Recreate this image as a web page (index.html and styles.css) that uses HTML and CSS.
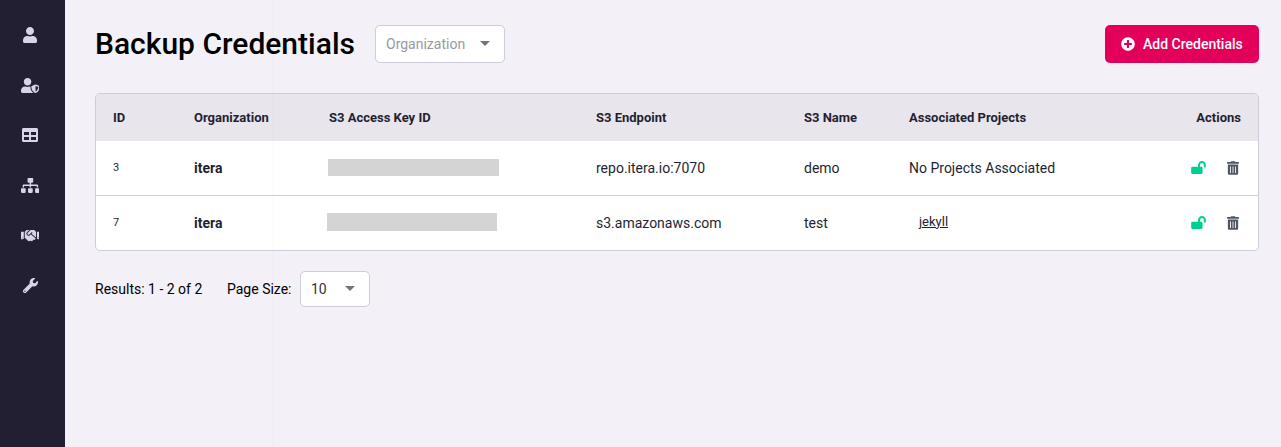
FILE: index.html
```html
<!DOCTYPE html>
<html lang="en">
<head>
<meta charset="utf-8">
<title>Backup Credentials</title>
<link rel="stylesheet" href="styles.css">
</head>
<body>
<svg class="defs" aria-hidden="true">
  <symbol id="lock-open" viewBox="0 0 576 512"><path d="M423.5 0C339.5.3 272 69.500 272 153.500V224H48c-26.500 0-48 21.500-48 48v192c0 26.500 21.500 48 48 48h352c26.500 0 48-21.500 48-48V272c0-26.500-21.500-48-48-48h-48v-71.100c0-39.600 31.700-72.500 71.300-72.900 40-.4 72.700 32.100 72.700 72v80c0 13.300 10.700 24 24 24h32c13.300 0 24-10.700 24-24v-80C576 68 507.500-.3 423.500 0z"/></symbol>
  <symbol id="trash" viewBox="0 0 448 512"><path d="M32 464a48 48 0 0 0 48 48h288a48 48 0 0 0 48-48V128H32zm272-256a16 16 0 0 1 32 0v224a16 16 0 0 1-32 0zm-96 0a16 16 0 0 1 32 0v224a16 16 0 0 1-32 0zm-96 0a16 16 0 0 1 32 0v224a16 16 0 0 1-32 0zM432 32H312l-9.400-18.700A24 24 0 0 0 281.100 0H166.800a23.720 23.720 0 0 0-21.400 13.300L136 32H16A16 16 0 0 0 0 48v32a16 16 0 0 0 16 16h416a16 16 0 0 0 16-16V48a16 16 0 0 0-16-16z"/></symbol>
</svg>
<div class="app">
  <nav class="sidebar">
    <a class="nav-item"><svg viewBox="0 0 448 512"><path d="M224 256c70.7 0 128-57.3 128-128S294.7 0 224 0 96 57.3 96 128s57.3 128 128 128zm89.6 32h-16.7c-22.2 10.2-46.9 16-72.9 16s-50.6-5.8-72.9-16h-16.7C60.2 288 0 348.2 0 422.4V464c0 26.5 21.5 48 48 48h352c26.5 0 48-21.5 48-48v-41.6c0-74.2-60.2-134.400-134.400-134.400z"/></svg></a>
    <a class="nav-item"><svg viewBox="0 0 640 512"><path d="M622.3 271.1l-115.200-45c-4.100-1.600-12.600-3.700-22.200 0l-115.200 45c-10.700 4.200-17.700 14-17.700 24.900 0 111.600 68.700 188.800 132.900 213.900 9.600 3.700 18 1.600 22.200 0C558.400 489.900 640 420.500 640 296c0-10.900-7-20.700-17.700-24.900zM496 462.400V273.300l95.500 37.300c-5.600 87.100-60.900 135.400-95.500 151.800zM224 256c70.700 0 128-57.300 128-128S294.700 0 224 0 96 57.300 96 128s57.300 128 128 128zm96 40c0-2.500.8-4.800 1.100-7.200-2.500-.1-4.900-.8-7.500-.8h-16.700c-22.200 10.200-46.900 16-72.900 16s-50.600-5.800-72.900-16h-16.700C60.200 288 0 348.200 0 422.400V464c0 26.500 21.500 48 48 48h352c6.800 0 13.300-1.500 19.200-4-54-42.900-99.200-116.700-99.200-212z"/></svg></a>
    <a class="nav-item"><svg viewBox="0 0 512 512"><path d="M464 32H48C21.490 32 0 53.490 0 80v352c0 26.510 21.490 48 48 48h416c26.510 0 48-21.490 48-48V80c0-26.510-21.490-48-48-48zM224 416H64v-96h160v96zm0-160H64v-96h160v96zm224 160H288v-96h160v96zm0-160H288v-96h160v96z"/></svg></a>
    <a class="nav-item"><svg viewBox="0 0 640 512"><path d="M128 352H32c-17.670 0-32 14.330-32 32v96c0 17.670 14.330 32 32 32h96c17.670 0 32-14.330 32-32v-96c0-17.670-14.330-32-32-32zm-24-80h192v48h48v-48h192v48h48v-57.590c0-21.170-17.230-38.410-38.410-38.410H344v-64h40c17.670 0 32-14.330 32-32V32c0-17.670-14.330-32-32-32H256c-17.670 0-32 14.330-32 32v96c0 17.670 14.330 32 32 32h40v64H94.410C73.230 224 56 241.230 56 262.410V320h48v-48zm264 80h-96c-17.670 0-32 14.330-32 32v96c0 17.670 14.330 32 32 32h96c17.670 0 32-14.330 32-32v-96c0-17.670-14.330-32-32-32zm240 0h-96c-17.670 0-32 14.330-32 32v96c0 17.670 14.330 32 32 32h96c17.670 0 32-14.330 32-32v-96c0-17.670-14.330-32-32-32z"/></svg></a>
    <a class="nav-item"><svg viewBox="0 0 640 512"><path d="M434.7 64h-85.900c-8 0-15.700 3-21.600 8.400l-98.300 90c-.1.1-.2.3-.3.4-16.600 15.600-16.300 40.500-2.100 56 12.700 13.900 39.400 17.600 56.100 2.700.1-.1.3-.1.4-.2l79.900-73.200c6.500-5.900 16.700-5.500 22.600 1 6 6.500 5.500 16.600-1 22.600l-26.100 23.900L504 313.800c2.900 2.400 5.500 5 7.900 7.700V128l-54.600-54.600c-5.900-6-14.100-9.400-22.600-9.400zM544 128.200v223.900c0 17.700 14.300 32 32 32h64V128.200h-96zm48 223.900c-8.800 0-16-7.200-16-16s7.200-16 16-16 16 7.200 16 16-7.200 16-16 16zM0 384h64c17.700 0 32-14.300 32-32V128.200H0V384zm48-63.900c8.800 0 16 7.200 16 16s-7.200 16-16 16-16-7.200-16-16c0-8.900 7.200-16 16-16zm435.900 18.600L334.600 217.500l-30 27.500c-29.700 27.100-75.200 24.500-101.700-4.400-26.900-29.400-24.800-74.900 4.400-101.700L289.100 64h-83.800c-8.500 0-16.600 3.400-22.600 9.400L128 128v223.900h18.300l90.500 81.900c27.400 22.300 67.700 18.100 90-9.300l.2-.2 17.900 15.500c15.900 13 39.400 10.500 52.300-5.400l31.400-38.600 5.400 4.400c13.700 11.100 33.900 9.100 45-4.700l9.500-11.700c11.200-13.800 9.100-33.900-4.600-45.100z"/></svg></a>
    <a class="nav-item"><svg viewBox="0 0 512 512"><path d="M507.730 109.100c-2.240-9.030-13.540-12.090-20.120-5.510l-74.360 74.360-67.880-11.310-11.310-67.880 74.360-74.360c6.620-6.620 3.430-17.900-5.660-20.160-47.380-11.740-99.550.91-136.580 37.930-39.640 39.640-50.550 97.100-34.050 147.200L18.740 402.760c-24.990 24.990-24.990 65.510 0 90.500 24.990 24.990 65.510 24.990 90.500 0l213.210-213.210c50.120 16.710 107.470 5.680 147.370-34.220 37.070-37.070 49.700-89.320 37.910-136.730zM64 472c-13.250 0-24-10.750-24-24 0-13.260 10.750-24 24-24s24 10.740 24 24c0 13.250-10.750 24-24 24z"/></svg></a>
  </nav>
  <main class="content">
    <header class="page-header">
      <h1 class="title">Backup Credentials</h1>
      <div class="select select-org"><span>Organization</span><i class="caret"></i></div>
      <button class="add-button"><svg viewBox="0 0 512 512"><path d="M256 8C119 8 8 119 8 256s111 248 248 248 248-111 248-248S393 8 256 8zm144 276c0 6.600-5.400 12-12 12h-92v92c0 6.600-5.400 12-12 12h-56c-6.600 0-12-5.400-12-12v-92h-92c-6.600 0-12-5.400-12-12v-56c0-6.600 5.400-12 12-12h92v-92c0-6.600 5.400-12 12-12h56c6.600 0 12 5.400 12 12v92h92c6.600 0 12 5.400 12 12v56z"/></svg><span>Add Credentials</span></button>
    </header>
    <section class="table">
      <div class="row head">
        <span>ID</span><span>Organization</span><span>S3 Access Key ID</span><span>S3 Endpoint</span><span>S3 Name</span><span>Associated Projects</span><span class="actions-head">Actions</span>
      </div>
      <div class="row">
        <span class="id">3</span><span class="org">itera</span><span class="mask mask-first"></span><span>repo.itera.io:7070</span><span>demo</span><span>No Projects Associated</span>
        <span class="actions"><svg class="lock"><use href="#lock-open"/></svg><svg class="trash"><use href="#trash"/></svg></span>
      </div>
      <div class="row">
        <span class="id">7</span><span class="org">itera</span><span class="mask mask-second"></span><span>s3.amazonaws.com</span><span>test</span><a class="project">jekyll</a>
        <span class="actions"><svg class="lock"><use href="#lock-open"/></svg><svg class="trash"><use href="#trash"/></svg></span>
      </div>
    </section>
    <footer class="pager">
      <span class="results">Results: 1 - 2 of 2</span>
      <span class="size-label">Page Size:</span>
      <div class="select select-size"><span>10</span><i class="caret"></i></div>
    </footer>
  </main>
</div>
<div class="seam"></div>
</body>
</html>
```
FILE: styles.css
```css
* { box-sizing: border-box; }
body {
  margin: 0;
  background: #f3f0f8;
  color: #000;
  font: 14px/20px Roboto, "Liberation Sans", sans-serif;
}
.defs { display: none; }
.app { display: flex; height: 447px; }
.sidebar {
  width: 65px;
  flex: none;
  background: #231f32;
  padding: 10px 5px 0 0;
}
.nav-item {
  display: flex;
  height: 50px;
  align-items: center;
  justify-content: center;
}
.nav-item svg { height: 15px; fill: #d9d4e6; }
.nav-item:first-child svg { width: 14px; height: 16px; }
.nav-item:nth-child(3) svg { width: 16px; height: 16px; }
.content { flex: 1; padding: 25px 22px 0 30px; }
.page-header { display: flex; align-items: center; height: 38px; }
.title { margin: 0; font-size: 30px; font-weight: 500; line-height: 38px; width: 280px; white-space: nowrap; }
.select {
  display: flex;
  align-items: center;
  justify-content: space-between;
  background: #fff;
  border: 1px solid #cecbda;
  border-radius: 5px;
}
.select-org { width: 130px; height: 38px; padding: 0 14px 0 10px; color: #999; }
.select-size { width: 70px; height: 36px; padding: 0 14px 0 10px; color: #333; }
.caret {
  margin-bottom: 1px;
  border: 5px solid transparent;
  border-top-color: #757575;
  border-bottom: 0;
}
.add-button {
  display: flex;
  align-items: center;
  gap: 8px;
  margin-left: auto;
  width: 154px;
  height: 38px;
  padding: 0 0 0 16px;
  border: 0;
  border-radius: 5px;
  background: #e2005b;
  color: #fff;
  font: 500 14px/20px Roboto, sans-serif;
  white-space: nowrap;
}
.add-button svg { width: 14px; height: 14px; fill: #fff; }
.table {
  margin-top: 30px;
  border: 1px solid #cecbda;
  border-radius: 5px;
  background: #fff;
  overflow: hidden;
  color: #231f32;
}
.row {
  display: grid;
  grid-template-columns: 81px 135px 267px 208px 105px 1fr 60px;
  align-items: center;
  height: 54px;
  padding: 0 17px;
}
.row + .row + .row { border-top: 1px solid #cecbda; height: 55px; }
.head { height: 47px; background: #e8e5ec; font-size: 13px; font-weight: 700; }
.actions-head { text-align: right; }
.id { font-size: 11px; }
.org { font-weight: 700; }
.mask { background: #d4d4d4; }
.mask-first { width: 171px; height: 17px; margin: 0 0 1px -1px; }
.mask-second { width: 170px; height: 18px; margin: 0 0 2px -2px; }
.project { font-size: 13px; text-decoration: underline; margin: 0 0 3px 10px; }
.actions { display: flex; justify-content: flex-end; align-items: center; gap: 21px; padding: 0 2px 1px 0; }
.lock { width: 15px; height: 13px; fill: #00cf92; flex: none; }
.trash { width: 12px; height: 14px; fill: #4f5561; flex: none; }
.pager { display: flex; align-items: center; margin-top: 20px; }
.results { width: 132px; }
.size-label { width: 73px; }
/* faint full-height divider overlaying the page */
.seam {
  position: absolute;
  left: 272px;
  top: 0;
  width: 2px;
  height: 447px;
  background: rgba(35, 31, 50, 0.012);
}
```
